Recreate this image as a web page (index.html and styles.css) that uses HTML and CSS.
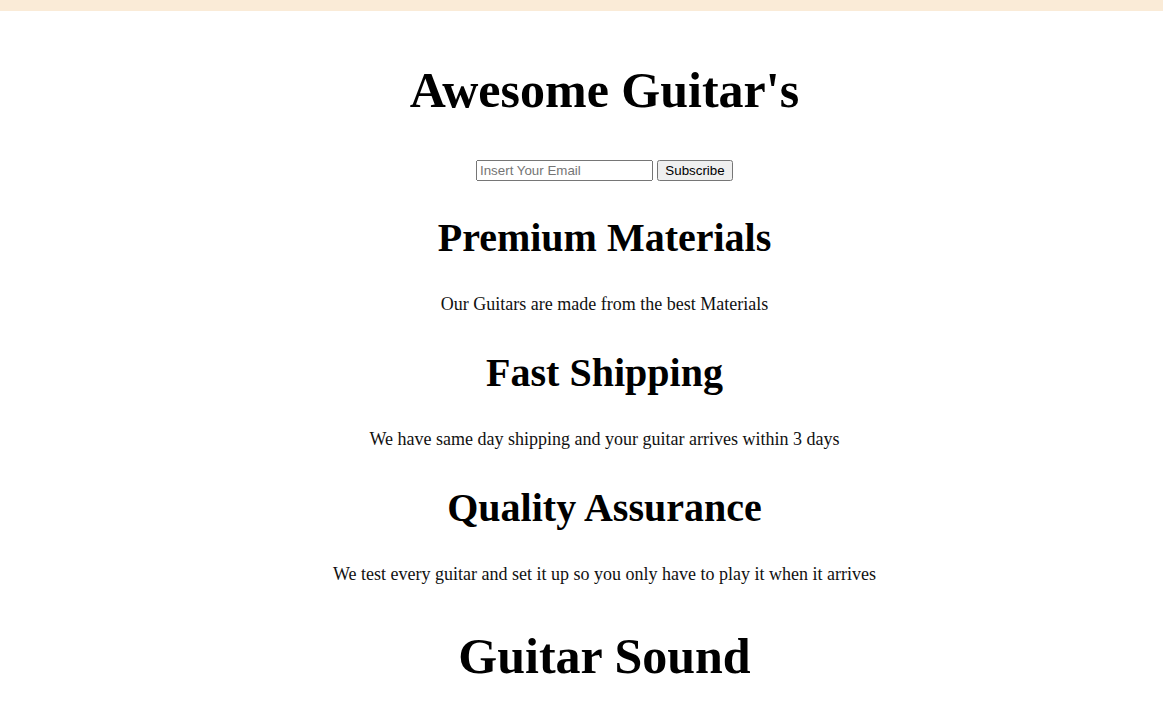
FILE: index.html
```html
<!DOCTYPE html>
<html>
<head>
<meta charset="utf-8">
<link rel="stylesheet" href="styles.css">
</head>
<body>
<header class="top-bar"></header>
<main class="page">
  <h1 class="title">Awesome Guitar's</h1>
  <form class="subscribe">
    <input class="email" type="email" placeholder="Insert Your Email">
    <button class="btn" type="button">Subscribe</button>
  </form>
  <section class="feature">
    <h2 class="feature-title">Premium Materials</h2>
    <p class="feature-text">Our Guitars are made from the best Materials</p>
  </section>
  <section class="feature">
    <h2 class="feature-title">Fast Shipping</h2>
    <p class="feature-text">We have same day shipping and your guitar arrives within 3 days</p>
  </section>
  <section class="feature">
    <h2 class="feature-title">Quality Assurance</h2>
    <p class="feature-text">We test every guitar and set it up so you only have to play it when it arrives</p>
  </section>
  <h1 class="title sound">Guitar Sound</h1>
</main>
</body>
</html>
```
FILE: styles.css
```css
html, body {
  margin: 0;
  padding: 0;
  background: #fff;
}
body {
  font-family: "Liberation Serif", "Times New Roman", serif;
  color: #000;
}
.top-bar {
  height: 11px;
  background: #faebd7;
}
.page {
  text-align: center;
  padding: 0 0 0 46px;
}
.title {
  font-size: 50px;
  margin: 51px 0 40px;
  line-height: 1.15;
}
.subscribe {
  display: flex;
  justify-content: center;
  gap: 4px;
  margin: 0;
}
.email, .btn {
  font-family: "Liberation Sans", Arial, sans-serif;
  font-size: 13.33px;
  height: 21px;
  box-sizing: border-box;
}
.email {
  width: 177px;
}
.btn {
  width: 76px;
}
.feature-title {
  font-size: 40px;
  margin: 33px 0;
}
.feature-text {
  font-size: 18px;
  color: #111;
  margin: 0 0 34px;
}
.sound {
  margin-top: 43px;
}
```
